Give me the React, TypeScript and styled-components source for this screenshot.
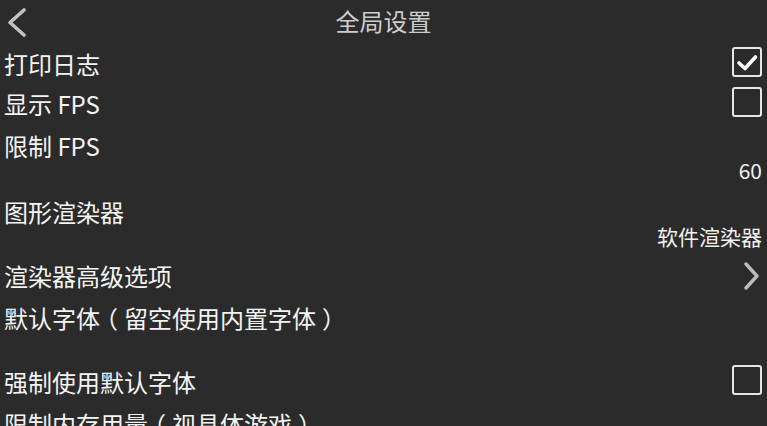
import React from "react";
import styled, { createGlobalStyle } from "styled-components";

const GlobalStyle = createGlobalStyle`
  html, body {
    margin: 0;
    padding: 0;
    background: #2b2b2b;
    overflow: hidden;
  }
  body {
    font-family: "Noto Sans CJK SC", "Noto Sans", sans-serif;
  }
`;

type Item =
  | { kind: "check"; label: string; checked: boolean }
  | { kind: "value"; label: string; value: string }
  | { kind: "link"; label: string };

const items: Item[] = [
  { kind: "check", label: "打印日志", checked: true },
  { kind: "check", label: "显示 FPS", checked: false },
  { kind: "value", label: "限制 FPS", value: "60" },
  { kind: "value", label: "图形渲染器", value: "软件渲染器" },
  { kind: "link", label: "渲染器高级选项" },
  { kind: "value", label: "默认字体（留空使用内置字体）", value: "" },
  { kind: "check", label: "强制使用默认字体", checked: false },
  { kind: "value", label: "限制内存用量（视具体游戏）", value: "" },
];

const Page = styled.div`
  width: 767px;
  height: 426px;
  background: #2b2b2b;
  color: #f4f4f4;
  overflow: hidden;
  display: flex;
  flex-direction: column;
`;

const Header = styled.div`
  height: 44px;
  flex-shrink: 0;
  display: grid;
  grid-template-columns: 60px 1fr 60px;
  align-items: center;
`;

const BackButton = styled.div`
  display: flex;
  align-items: center;
  padding-left: 6px;
  height: 44px;
`;

const Title = styled.div`
  text-align: center;
  font-size: 24px;
  color: #cdcdcd;
  line-height: 44px;
  margin-top: -2px;
`;

const Row = styled.div`
  height: 40px;
  flex-shrink: 0;
  display: flex;
  align-items: center;
  justify-content: space-between;
  padding: 0 5px 0 4px;
`;

const Block = styled.div`
  height: 66px;
  flex-shrink: 0;
  box-sizing: border-box;
  padding: 4px 5px 0 4px;
  display: flex;
  flex-direction: column;
`;

const Label = styled.div`
  font-size: 24px;
  line-height: 36px;
  white-space: nowrap;
`;

// full-width brackets drawn centred in their box, as the device font does
const Paren = styled.span`
  display: inline-block;
  width: 1em;
  text-align: center;
  font-feature-settings: "halt";
`;

const Value = styled.div`
  font-size: 21px;
  line-height: 20px;
  margin-top: -4px;
  text-align: right;
  color: #f0f0f0;
`;

const Box = styled.div`
  width: 26px;
  height: 26px;
  border: 2px solid #e6e6e6;
  border-radius: 3px;
  display: flex;
  align-items: center;
  justify-content: center;
  margin-top: -4px;
`;

const Checkbox: React.FC<{ checked: boolean }> = ({ checked }) => (
  <Box>
    {checked && (
      <svg width="24" height="24" viewBox="0 0 24 24">
        <polyline
          points="4,13 10,18.5 20.5,7"
          fill="none"
          stroke="#ffffff"
          strokeWidth="3.6"
          strokeLinecap="round"
          strokeLinejoin="round"
        />
      </svg>
    )}
  </Box>
);

const LabelText: React.FC<{ text: string }> = ({ text }) => (
  <Label>
    {text.split(/([（）])/).map((part, i) =>
      part === "（" || part === "）" ? <Paren key={i}>{part}</Paren> : part
    )}
  </Label>
);

const App: React.FC = () => (
  <>
    <GlobalStyle />
    <Page>
      <Header>
        <BackButton>
          <svg width="22" height="30" viewBox="0 0 22 30">
            <polyline
              points="18,3 4,15.5 18,28"
              fill="none"
              stroke="#c2c2c2"
              strokeWidth="3.6"
              strokeLinecap="round"
              strokeLinejoin="round"
            />
          </svg>
        </BackButton>
        <Title>全局设置</Title>
        <div />
      </Header>
      {items.map((item, i) => {
        if (item.kind === "check") {
          return (
            <Row key={i}>
              <LabelText text={item.label} />
              <Checkbox checked={item.checked} />
            </Row>
          );
        }
        if (item.kind === "link") {
          return (
            <Row key={i}>
              <LabelText text={item.label} />
              <svg width="18" height="28" viewBox="0 0 18 28" style={{ marginRight: 2 }}>
                <polyline
                  points="4,2 15,14 4,26"
                  fill="none"
                  stroke="#bdbdbd"
                  strokeWidth="3.4"
                  strokeLinecap="round"
                  strokeLinejoin="round"
                />
              </svg>
            </Row>
          );
        }
        return (
          <Block key={i}>
            <LabelText text={item.label} />
            <Value>{item.value}</Value>
          </Block>
        );
      })}
    </Page>
  </>
);

export default App;
